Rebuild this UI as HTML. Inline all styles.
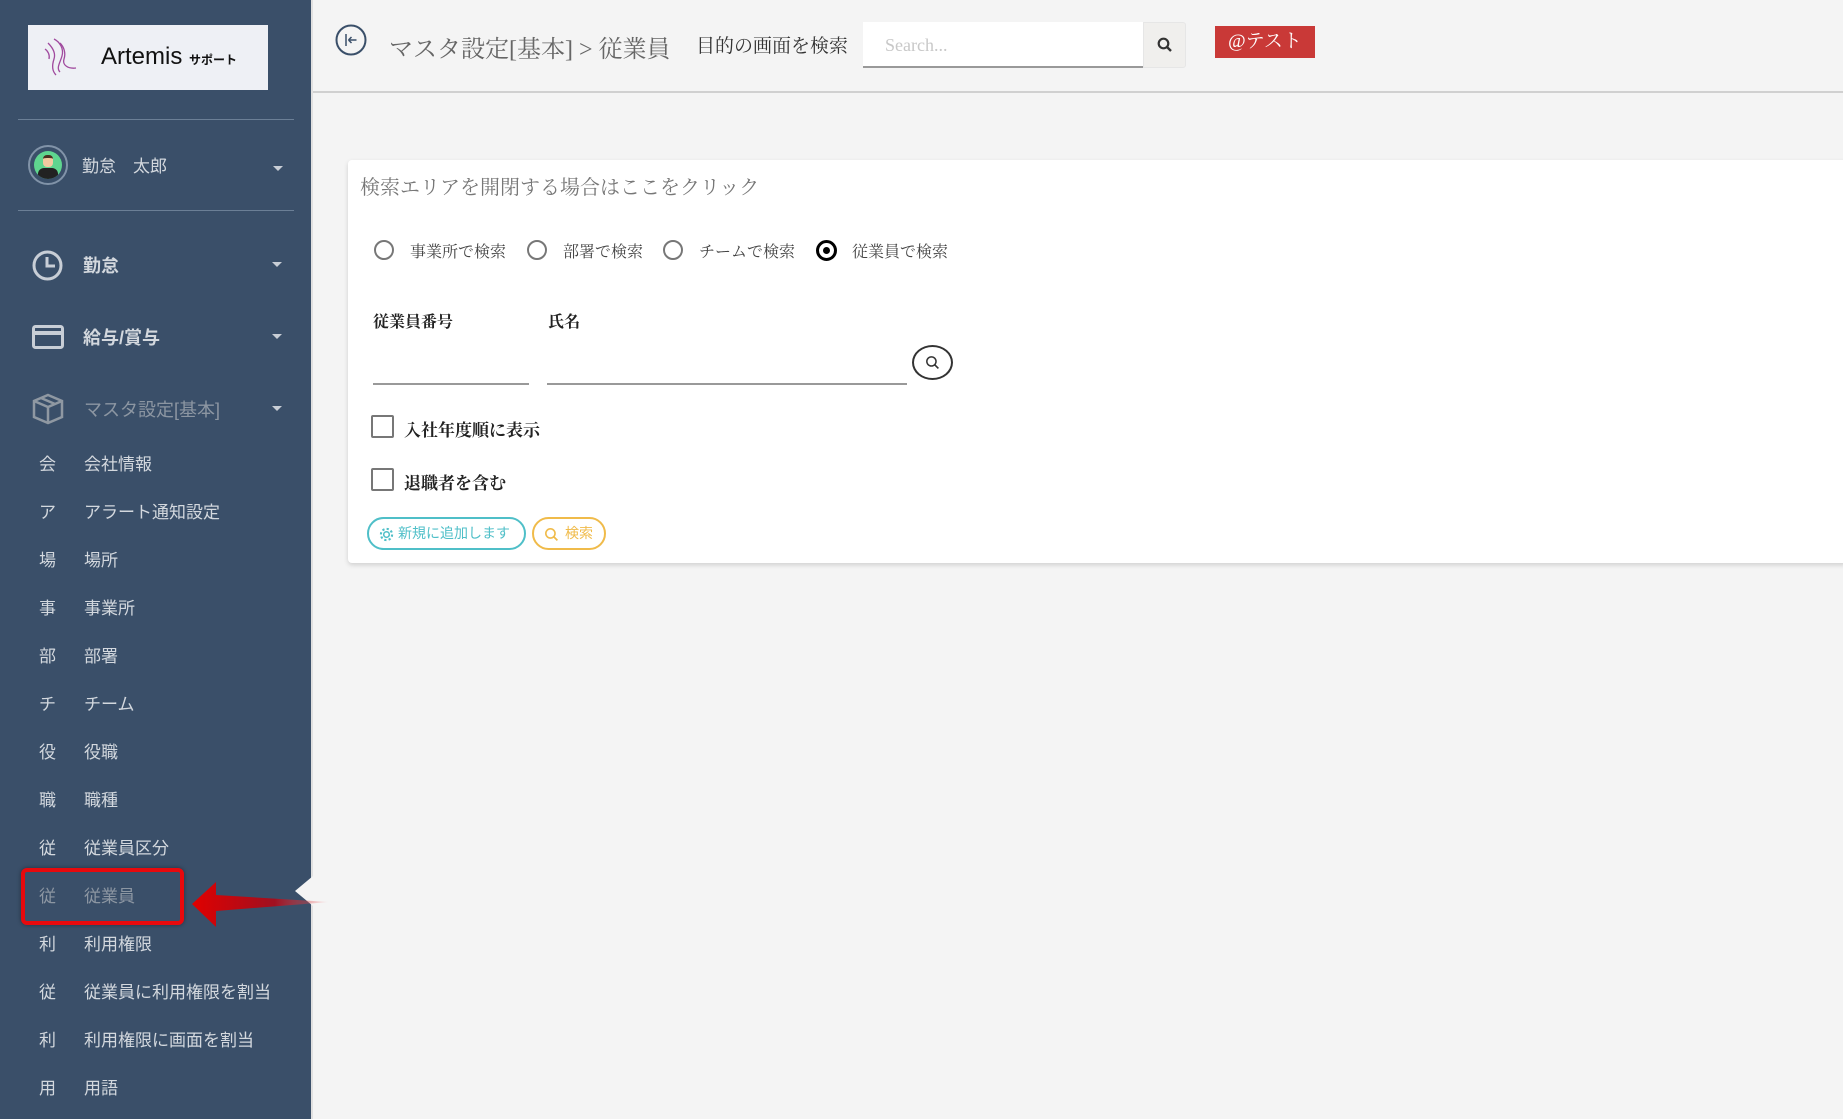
<!DOCTYPE html>
<html><head><meta charset="utf-8">
<style>
*{margin:0;padding:0;box-sizing:border-box}
body{width:1843px;height:1119px;overflow:hidden;background:#f4f4f4;font-family:"Liberation Sans","Noto Sans CJK JP",sans-serif;position:relative}
.sb{position:absolute;left:0;top:0;width:313px;height:1119px;background:#3a4f69;border-right:2px solid #e0e0e0}
.abs{position:absolute}
.logo{left:28px;top:25px;width:240px;height:65px;background:#eef0f5}
.hr{height:1px;background:#6b7f96;left:18px;width:276px}
.t{color:#d3d8de;font-size:17px;white-space:nowrap;line-height:20px}
.mi{position:absolute;left:0;width:300px;height:20px}
.mi .a{position:absolute;left:39px}
.mi .b{position:absolute;left:84px}
.caret{position:absolute;width:0;height:0;border-left:5px solid transparent;border-right:5px solid transparent;border-top:5px solid #c8ced6}
.serif{font-family:"Liberation Serif","Noto Serif CJK JP",serif;white-space:nowrap}
</style></head><body>
<div class="sb">
  <div class="abs logo">
    <svg class="abs" style="left:14px;top:10px" width="40" height="45" viewBox="0 0 40 45"><g fill="none" stroke="#a04a9e" stroke-width="1.3"><path d="M6 8c4 4 8 10 6 16s-2 12 2 16"/><path d="M12 4c6 3 10 10 8 17s-6 12 -2 16"/><path d="M18 8c4 4 6 10 4 16s4 10 12 9"/><path d="M3 14c3 2 5 6 4 10"/></g></svg>
    <div class="abs" style="left:73px;top:18px;font-size:24px;color:#111;white-space:nowrap;font-family:'Liberation Sans',sans-serif">Artemis <span style="font-size:12px;font-weight:bold;font-family:'Noto Sans CJK JP',sans-serif">サポート</span></div>
  </div>
  <div class="abs hr" style="top:119px"></div>
  <div class="abs" style="left:28px;top:145px;width:40px;height:40px;border-radius:50%;border:2px solid #8193a8"></div>
  <div class="abs" style="left:34px;top:151px;width:28px;height:28px;border-radius:50%;background:#5fd58f;overflow:hidden">
    <div class="abs" style="left:9px;top:4px;width:10px;height:12px;background:#f2c9a0;border-radius:4px;border-top:3px solid #4a3020"></div>
    <div class="abs" style="left:4px;top:17px;width:20px;height:12px;background:#222;border-radius:6px 6px 0 0"></div>
  </div>
  <div class="abs t" style="left:82px;top:157px;font-size:17px">勤怠　太郎</div>
  <div class="caret" style="left:273px;top:166px"></div>
  <div class="abs hr" style="top:210px"></div>

  <svg class="abs" style="left:32px;top:250px" width="31" height="31" viewBox="0 0 31 31"><circle cx="15.5" cy="15.5" r="13.5" fill="none" stroke="#c8ced6" stroke-width="3"/><path d="M15 7v9h8" fill="none" stroke="#c8ced6" stroke-width="3"/></svg>
  <div class="abs t" style="left:83px;top:256px;font-weight:bold;font-size:18px">勤怠</div>
  <div class="caret" style="left:272px;top:262px"></div>

  <svg class="abs" style="left:32px;top:325px" width="32" height="24" viewBox="0 0 32 24"><rect x="1.5" y="1.5" width="29" height="21" rx="2" fill="none" stroke="#c8ced6" stroke-width="3"/><rect x="1.5" y="6" width="29" height="4" fill="#c8ced6"/></svg>
  <div class="abs t" style="left:83px;top:328px;font-weight:bold;font-size:18px">給与/賞与</div>
  <div class="caret" style="left:272px;top:334px"></div>

  <svg class="abs" style="left:32px;top:393px" width="32" height="32" viewBox="0 0 32 32"><g fill="none" stroke="#8f98a2" stroke-width="2.5"><path d="M16 2L30 8v16L16 30 2 24V8z"/><path d="M2 8l14 6 14-6M16 14v16M9 5l14 6"/></g></svg>
  <div class="abs t" style="left:84px;top:400px;color:#8c96a2;font-size:18px">マスタ設定[基本]</div>
  <div class="caret" style="left:272px;top:406px"></div>

  <div class="mi t" style="top:455px"><span class="a">会</span><span class="b">会社情報</span></div>
  <div class="mi t" style="top:503px"><span class="a">ア</span><span class="b">アラート通知設定</span></div>
  <div class="mi t" style="top:551px"><span class="a">場</span><span class="b">場所</span></div>
  <div class="mi t" style="top:599px"><span class="a">事</span><span class="b">事業所</span></div>
  <div class="mi t" style="top:647px"><span class="a">部</span><span class="b">部署</span></div>
  <div class="mi t" style="top:695px"><span class="a">チ</span><span class="b">チーム</span></div>
  <div class="mi t" style="top:743px"><span class="a">役</span><span class="b">役職</span></div>
  <div class="mi t" style="top:791px"><span class="a">職</span><span class="b">職種</span></div>
  <div class="mi t" style="top:839px"><span class="a">従</span><span class="b">従業員区分</span></div>
  <div class="mi t" style="top:887px;color:#8c96a2"><span class="a">従</span><span class="b">従業員</span></div>
  <div class="mi t" style="top:935px"><span class="a">利</span><span class="b">利用権限</span></div>
  <div class="mi t" style="top:983px"><span class="a">従</span><span class="b">従業員に利用権限を割当</span></div>
  <div class="mi t" style="top:1031px"><span class="a">利</span><span class="b">利用権限に画面を割当</span></div>
  <div class="mi t" style="top:1079px"><span class="a">用</span><span class="b">用語</span></div>
</div>
<div class="abs" style="left:295px;top:876px;width:0;height:0;border-top:15px solid transparent;border-bottom:15px solid transparent;border-right:18px solid #f4f4f4"></div>
<div class="abs" style="left:21px;top:868px;width:163px;height:57px;border:4px solid #e8090d;border-radius:6px;box-shadow:0 0 4px rgba(0,0,0,.4)"></div>
<svg class="abs" style="left:190px;top:880px" width="145" height="50" viewBox="0 0 145 50"><defs><linearGradient id="g" x1="0" x2="1"><stop offset="0" stop-color="#e00000"/><stop offset=".6" stop-color="#a01020"/><stop offset="1" stop-color="#ff6060" stop-opacity="0"/></linearGradient></defs><path d="M2 24L26 2v13L140 22 26 31v16z" fill="url(#g)"/></svg>

<!-- header -->
<svg class="abs" style="left:335px;top:24px" width="32" height="32" viewBox="0 0 32 32"><circle cx="16" cy="16" r="14.5" fill="none" stroke="#3a4f69" stroke-width="2"/><path d="M11 10v12M13.5 16h8M13.5 16l3-3M13.5 16l3 3" fill="none" stroke="#3a4f69" stroke-width="1.5"/></svg>
<div class="abs serif" style="left:389px;top:29px;font-size:24px;color:#666">マスタ設定[基本] &gt; 従業員</div>
<div class="abs serif" style="left:696px;top:31px;font-size:19px;color:#333">目的の画面を検索</div>
<div class="abs" style="left:863px;top:22px;width:280px;height:46px;background:#fff;border-bottom:2px solid #999"></div>
<div class="abs serif" style="left:885px;top:35px;font-size:18px;color:#c8c8c8">Search...</div>
<div class="abs" style="left:1143px;top:22px;width:43px;height:46px;background:#f0efed;border:1px solid #e6e6e6;border-radius:0 3px 3px 0"></div>
<svg class="abs" style="left:1157px;top:37px" width="16" height="16" viewBox="0 0 16 16"><circle cx="6.5" cy="6.5" r="4.8" fill="none" stroke="#333" stroke-width="2.2"/><path d="M10 10l4 4" stroke="#333" stroke-width="2.4"/></svg>
<div class="abs serif" style="left:1215px;top:26px;width:100px;height:32px;background:#c93937;color:#fff;font-size:19px;line-height:32px;text-align:center">@テスト</div>
<div class="abs" style="left:313px;top:91px;width:1530px;height:2px;background:#d0d0d0"></div>

<!-- card -->
<div class="abs" style="left:348px;top:160px;width:1500px;height:403px;background:#fff;border-radius:4px;box-shadow:0 2px 5px rgba(0,0,0,.15)"></div>
<div class="abs serif" style="left:360px;top:171px;font-size:20px;color:#777">検索エリアを開閉する場合はここをクリック</div>

<div class="abs" style="left:374px;top:240px;width:20px;height:20px;border-radius:50%;border:2px solid #777"></div>
<div class="abs serif" style="left:410px;top:239px;font-size:16px;color:#444">事業所で検索</div>
<div class="abs" style="left:527px;top:240px;width:20px;height:20px;border-radius:50%;border:2px solid #777"></div>
<div class="abs serif" style="left:563px;top:239px;font-size:16px;color:#444">部署で検索</div>
<div class="abs" style="left:663px;top:240px;width:20px;height:20px;border-radius:50%;border:2px solid #777"></div>
<div class="abs serif" style="left:699px;top:239px;font-size:16px;color:#444">チームで検索</div>
<div class="abs" style="left:816px;top:240px;width:21px;height:21px;border-radius:50%;border:3px solid #000"></div>
<div class="abs" style="left:823px;top:247px;width:7px;height:7px;border-radius:50%;background:#000"></div>
<div class="abs serif" style="left:852px;top:239px;font-size:16px;color:#444">従業員で検索</div>

<div class="abs serif" style="left:373px;top:309px;font-size:16px;color:#222;font-weight:bold">従業員番号</div>
<div class="abs serif" style="left:548px;top:309px;font-size:16px;color:#222;font-weight:bold">氏名</div>
<div class="abs" style="left:373px;top:383px;width:156px;height:2px;background:#999"></div>
<div class="abs" style="left:547px;top:383px;width:360px;height:2px;background:#999"></div>
<div class="abs" style="left:912px;top:345px;width:41px;height:35px;border:2px solid #333;border-radius:50%"></div>
<svg class="abs" style="left:925px;top:355px" width="15" height="15" viewBox="0 0 14 14"><circle cx="6" cy="6" r="4.3" fill="none" stroke="#333" stroke-width="1.4"/><path d="M9 9l3.5 3.5" stroke="#333" stroke-width="1.5"/></svg>

<div class="abs" style="left:371px;top:415px;width:23px;height:23px;border:2px solid #777;border-radius:2px"></div>
<div class="abs serif" style="left:404px;top:416px;font-size:17px;color:#222;font-weight:bold">入社年度順に表示</div>
<div class="abs" style="left:371px;top:468px;width:23px;height:23px;border:2px solid #777;border-radius:2px"></div>
<div class="abs serif" style="left:404px;top:469px;font-size:17px;color:#222;font-weight:bold">退職者を含む</div>

<div class="abs" style="left:367px;top:517px;width:159px;height:33px;border:2px solid #4fbfc8;border-radius:17px;color:#4fbfc8;font-size:14px;line-height:29px;padding-left:29px;white-space:nowrap">新規に追加します</div>
<svg class="abs" style="left:379px;top:527px" width="15" height="15" viewBox="0 0 16 16"><circle cx="8" cy="8" r="3" fill="none" stroke="#4fbfc8" stroke-width="1.6"/><circle cx="8" cy="8" r="6" fill="none" stroke="#4fbfc8" stroke-width="2.2" stroke-dasharray="2.4 2.3"/></svg>
<div class="abs" style="left:532px;top:517px;width:74px;height:33px;border:2px solid #f0bb4a;border-radius:17px;color:#f0bb4a;font-size:14px;line-height:29px;padding-left:31px;white-space:nowrap">検索</div>
<svg class="abs" style="left:544px;top:527px" width="15" height="15" viewBox="0 0 14 14"><circle cx="6" cy="6" r="4.3" fill="none" stroke="#f0bb4a" stroke-width="1.5"/><path d="M9 9l3.5 3.5" stroke="#f0bb4a" stroke-width="1.6"/></svg>
</body></html>
